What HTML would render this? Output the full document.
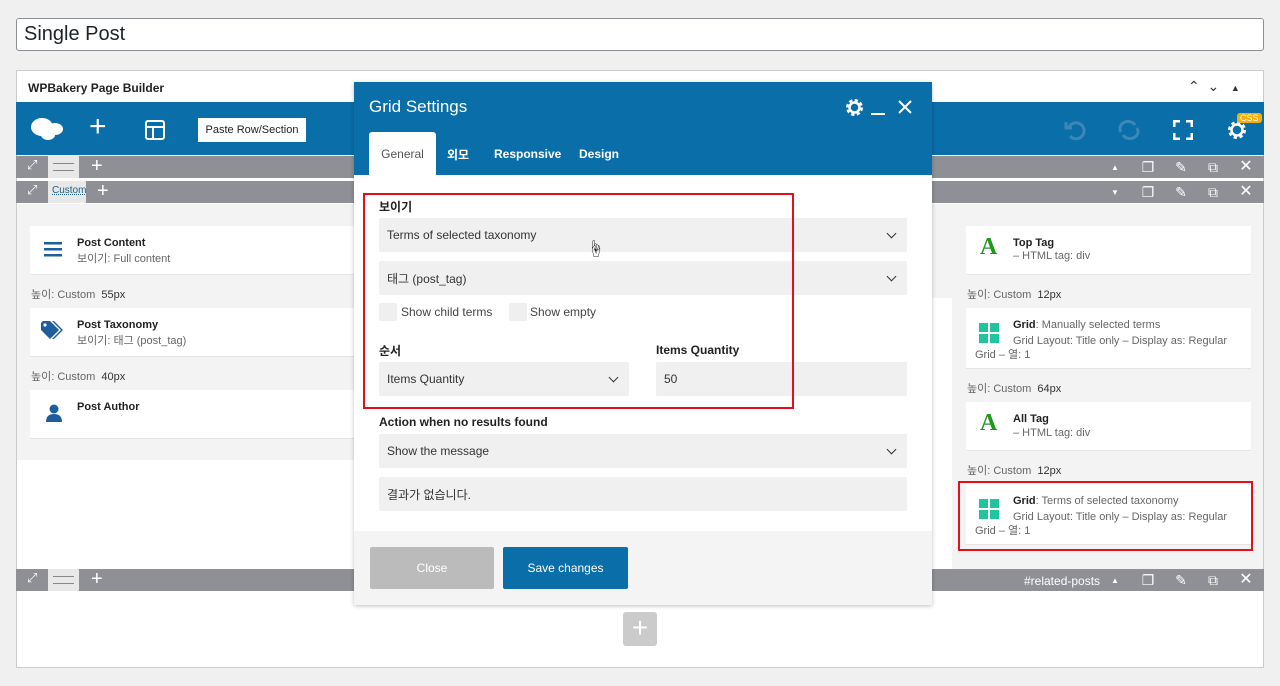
<!DOCTYPE html>
<html><head><meta charset="utf-8"><style>
*{box-sizing:border-box;margin:0;padding:0}
body{width:1280px;height:686px;background:#f0f0f0;font-family:"Liberation Sans","Noto Sans CJK KR",sans-serif;position:relative;overflow:hidden;color:#222}
.abs{position:absolute}
.title{left:16px;top:18px;width:1248px;height:33px;background:#fff;border:1px solid #8c8f94;border-radius:3px;font-size:20px;padding:4px 7px;color:#1d2327}
.panel{left:16px;top:70px;width:1248px;height:598px;background:#fff;border:1px solid #ccc}
.gbar{background:#8e9095;height:22px;left:16px;width:1248px}
.ico{color:#fff;font-size:16px}
.card{background:#fff;border-bottom:1px solid #e4e4e4}
.ct{font-size:11px;font-weight:bold;color:#222}
.cs{font-size:11px;color:#666}
.hl{font-size:11px;color:#666}
.hl b{color:#333;font-weight:normal}
.sel{background:#f0f0f0;border-radius:2px;font-size:12px;color:#333;padding:0 8px;display:flex;align-items:center;justify-content:space-between}
.chev{width:7px;height:7px;border-right:1.5px solid #333;border-bottom:1.5px solid #333;transform:rotate(45deg);margin-right:4px;margin-top:-4px}
.lbl{font-size:12px;font-weight:bold;color:#222}
.ri{position:absolute;color:#fff;font-size:14px;line-height:14px;width:16px;text-align:center}
</style></head><body>
<div class="abs title">Single Post</div>
<div class="abs panel"></div>
<div class="abs" style="left:28px;top:81px;font-size:12px;font-weight:bold">WPBakery Page Builder</div>
<div class="abs" style="left:1188px;top:78px;font-size:14px;color:#333">&#8963;&nbsp; &#8964;&nbsp;&nbsp; <span style="font-size:9px">&#9650;</span></div>
<div class="abs" style="left:16px;top:102px;width:1248px;height:53px;background:#0a6ea8"></div>
<svg class="abs" style="left:30px;top:115px" width="34" height="26"><ellipse cx="12" cy="12" rx="11" ry="9" fill="#fff"/><ellipse cx="25" cy="14" rx="8" ry="6" fill="#fff"/><ellipse cx="18" cy="20" rx="7" ry="5" fill="#fff"/></svg>
<div class="abs" style="left:89px;top:112px;color:#fff;font-size:30px;line-height:30px">+</div>
<svg class="abs" style="left:145px;top:120px" width="20" height="20"><rect x="1" y="1" width="18" height="18" rx="2" fill="none" stroke="#fff" stroke-width="2"/><path d="M1 7H19M8 7V19" stroke="#fff" stroke-width="2"/></svg>
<div class="abs" style="left:198px;top:118px;width:108px;height:24px;background:#fff;font-size:11px;line-height:24px;text-align:center;color:#222">Paste Row/Section</div>
<svg class="abs" style="left:1064px;top:119px" width="22" height="22" fill="none" stroke="#3d87b8" stroke-width="3"><path d="M5 8 A8 8 0 1 1 6 17"/><path d="M2 3V9H8"/></svg>
<svg class="abs" style="left:1118px;top:120px" width="22" height="20" fill="none" stroke="#3d87b8" stroke-width="3"><path d="M3 12A8 7 0 0 1 17 5M19 8A8 7 0 0 1 5 15"/></svg>
<svg class="abs" style="left:1173px;top:120px" width="20" height="20" fill="none" stroke="#fff" stroke-width="3"><path d="M1 7V1H7M13 1H19V7M19 13V19H13M7 19H1V13"/></svg>
<svg class="abs" style="left:1227px;top:120px" width="20" height="20"><circle cx="10" cy="10" r="7" fill="none" stroke="#fff" stroke-width="4" stroke-dasharray="3 2.5"/><circle cx="10" cy="10" r="5.5" fill="none" stroke="#fff" stroke-width="2.5"/></svg>
<div class="abs" style="left:1237px;top:113px;background:#f5b10a;color:#fff;font-size:9px;padding:0 3px;border-radius:3px">CSS</div>

<div class="abs gbar" style="top:156px"></div>
<div class="abs" style="left:48px;top:156px;width:31px;height:22px;background:#e8e8e8"><div style="margin:7px 5px;height:8px;border-top:1px solid #888;border-bottom:1px solid #888"></div></div>
<div class="abs gbar" style="top:181px"></div>
<div class="abs" style="left:48px;top:181px;width:38px;height:22px;background:#e8e8e8;font-size:10px;color:#1f5e8a;text-decoration:underline dotted;padding:4px 4px">Custom</div>
<div class="abs ico" style="left:27px;top:157px;font-size:13px">&#10530;</div>
<div class="abs ico" style="left:27px;top:182px;font-size:13px">&#10530;</div>
<div class="abs ico" style="left:91px;top:155px;font-size:20px;line-height:22px">+</div>
<div class="abs ico" style="left:97px;top:180px;font-size:20px;line-height:22px">+</div>

<div class="ri" style="left:1107px;top:161px;font-size:8px">&#9650;</div>
<div class="ri" style="left:1140px;top:160px">&#10064;</div>
<div class="ri" style="left:1173px;top:160px">&#9998;</div>
<div class="ri" style="left:1205px;top:160px">&#10697;</div>
<div class="ri" style="left:1238px;top:160px;font-size:16px">&#10005;</div>
<div class="ri" style="left:1107px;top:186px;font-size:8px">&#9660;</div>
<div class="ri" style="left:1140px;top:185px">&#10064;</div>
<div class="ri" style="left:1173px;top:185px">&#9998;</div>
<div class="ri" style="left:1205px;top:185px">&#10697;</div>
<div class="ri" style="left:1238px;top:185px;font-size:16px">&#10005;</div>

<!-- left column -->
<div class="abs" style="left:17px;top:204px;width:337px;height:256px;background:#f3f3f3"></div>
<div class="abs card" style="left:30px;top:226px;width:324px;height:49px"></div>
<svg class="abs" style="left:44px;top:242px" width="18" height="16" fill="#1d5f9e"><rect y="0" width="18" height="2.5"/><rect y="6" width="18" height="2.5"/><rect y="12" width="18" height="2.5"/></svg>
<div class="abs ct" style="left:77px;top:237px">Post Content</div>
<div class="abs cs" style="left:77px;top:250px">보이기: Full content</div>
<div class="abs hl" style="left:31px;top:286px">높이: Custom &nbsp;<b>55px</b></div>
<div class="abs card" style="left:30px;top:308px;width:324px;height:49px"></div>
<svg class="abs" style="left:40px;top:320px" width="26" height="22" fill="#1d5f9e"><path d="M1 3 L1 10 L10 19 L19 10 L10 1 L3 1Z"/><path d="M12 1 L21 10 L12 19 L14 19 L23 10 L14 1Z"/><circle cx="5" cy="5" r="1.6" fill="#fff"/></svg>
<div class="abs ct" style="left:77px;top:319px">Post Taxonomy</div>
<div class="abs cs" style="left:77px;top:332px">보이기: 태그 (post_tag)</div>
<div class="abs hl" style="left:31px;top:368px">높이: Custom &nbsp;<b>40px</b></div>
<div class="abs card" style="left:30px;top:390px;width:324px;height:49px"></div>
<svg class="abs" style="left:44px;top:403px" width="20" height="20" fill="#1d5f9e"><circle cx="10" cy="6" r="4.5"/><path d="M2 19 Q2 11 10 11 Q18 11 18 19Z"/></svg>
<div class="abs ct" style="left:77px;top:401px">Post Author</div>

<!-- right column -->
<div class="abs" style="left:952px;top:204px;width:311px;height:365px;background:#f3f3f3"></div>
<div class="abs" style="left:932px;top:204px;width:20px;height:94px;background:#f3f3f3"></div>
<div class="abs card" style="left:966px;top:226px;width:285px;height:49px"></div>
<div class="abs" style="left:980px;top:234px;font-size:24px;font-weight:bold;color:#1a9a1a;font-family:'Liberation Serif',serif">A</div>
<div class="abs ct" style="left:1013px;top:237px">Top Tag</div>
<div class="abs cs" style="left:1013px;top:250px">– HTML tag: div</div>
<div class="abs hl" style="left:967px;top:286px">높이: Custom &nbsp;<b>12px</b></div>
<div class="abs card" style="left:966px;top:308px;width:285px;height:61px"></div>
<svg class="abs" style="left:979px;top:323px" width="20" height="20" fill="#22c4a0"><rect width="9" height="9"/><rect x="11" width="9" height="9"/><rect y="11" width="9" height="9"/><rect x="11" y="11" width="9" height="9"/></svg>
<div class="abs cs" style="left:1013px;top:319px"><b style="color:#222">Grid</b>: Manually selected terms</div>
<div class="abs cs" style="left:975px;top:334px;width:270px;line-height:14px;text-indent:38px">Grid Layout: Title only – Display as: Regular Grid – 열: 1</div>
<div class="abs hl" style="left:967px;top:380px">높이: Custom &nbsp;<b>64px</b></div>
<div class="abs card" style="left:966px;top:402px;width:285px;height:49px"></div>
<div class="abs" style="left:980px;top:410px;font-size:24px;font-weight:bold;color:#1a9a1a;font-family:'Liberation Serif',serif">A</div>
<div class="abs ct" style="left:1013px;top:413px">All Tag</div>
<div class="abs cs" style="left:1013px;top:427px">– HTML tag: div</div>
<div class="abs hl" style="left:967px;top:462px">높이: Custom &nbsp;<b>12px</b></div>
<div class="abs card" style="left:966px;top:484px;width:285px;height:61px"></div>
<svg class="abs" style="left:979px;top:499px" width="20" height="20" fill="#22c4a0"><rect width="9" height="9"/><rect x="11" width="9" height="9"/><rect y="11" width="9" height="9"/><rect x="11" y="11" width="9" height="9"/></svg>
<div class="abs cs" style="left:1013px;top:495px"><b style="color:#222">Grid</b>: Terms of selected taxonomy</div>
<div class="abs cs" style="left:975px;top:510px;width:270px;line-height:14px;text-indent:38px">Grid Layout: Title only – Display as: Regular Grid – 열: 1</div>
<div class="abs" style="left:958px;top:481px;width:295px;height:70px;border:2px solid #e0101e"></div>

<div class="abs gbar" style="top:569px"></div>
<div class="abs" style="left:48px;top:569px;width:31px;height:22px;background:#e8e8e8"><div style="margin:7px 5px;height:8px;border-top:1px solid #888;border-bottom:1px solid #888"></div></div>
<div class="abs ico" style="left:27px;top:570px;font-size:13px">&#10530;</div>
<div class="abs ico" style="left:91px;top:568px;font-size:20px;line-height:22px">+</div>
<div class="abs" style="left:1024px;top:574px;color:#fff;font-size:12px">#related-posts</div>
<div class="ri" style="left:1107px;top:574px;font-size:8px">&#9650;</div>
<div class="ri" style="left:1140px;top:573px">&#10064;</div>
<div class="ri" style="left:1173px;top:573px">&#9998;</div>
<div class="ri" style="left:1205px;top:573px">&#10697;</div>
<div class="ri" style="left:1238px;top:573px;font-size:16px">&#10005;</div>
<div class="abs" style="left:623px;top:612px;width:34px;height:34px;background:#cbcbcb;border-radius:3px;color:#fff;font-size:28px;line-height:32px;text-align:center">+</div>

<!-- modal -->
<div class="abs" style="left:354px;top:82px;width:578px;height:523px;background:#fff;box-shadow:0 1px 4px rgba(0,0,0,.25)"></div>
<div class="abs" style="left:354px;top:82px;width:578px;height:93px;background:#0a6ea8"></div>
<div class="abs" style="left:369px;top:97px;font-size:17px;color:#fff">Grid Settings</div>
<svg class="abs" style="left:845px;top:98px" width="19" height="19"><circle cx="9.5" cy="9.5" r="6.5" fill="none" stroke="#fff" stroke-width="4" stroke-dasharray="3 2.1"/><circle cx="9.5" cy="9.5" r="5" fill="none" stroke="#fff" stroke-width="2.5"/></svg>
<div class="abs" style="left:871px;top:113px;width:14px;height:2px;background:#fff"></div>
<svg class="abs" style="left:898px;top:100px" width="14" height="14" stroke="#fff" stroke-width="2"><path d="M1 1L13 13M13 1L1 13"/></svg>
<div class="abs" style="left:369px;top:132px;width:67px;height:44px;background:#fff;border-radius:3px 3px 0 0;font-size:12px;color:#555;text-align:center;line-height:44px">General</div>
<div class="abs" style="left:447px;top:146px;font-size:12px;color:#fff;font-weight:bold">외모</div>
<div class="abs" style="left:494px;top:147px;font-size:12px;color:#fff;font-weight:bold">Responsive</div>
<div class="abs" style="left:579px;top:147px;font-size:12px;color:#fff;font-weight:bold">Design</div>

<div class="abs lbl" style="left:379px;top:198px">보이기</div>
<div class="abs sel" style="left:379px;top:218px;width:528px;height:34px">Terms of selected taxonomy<span class="chev"></span></div>
<div class="abs" style="left:587px;top:235px;font-size:17px;color:#222">☝</div>
<div class="abs sel" style="left:379px;top:261px;width:528px;height:34px">태그 (post_tag)<span class="chev"></span></div>
<div class="abs" style="left:379px;top:303px;width:18px;height:18px;background:#efefef;border-radius:2px"></div>
<div class="abs" style="left:401px;top:305px;font-size:12px;color:#444">Show child terms</div>
<div class="abs" style="left:509px;top:303px;width:18px;height:18px;background:#efefef;border-radius:2px"></div>
<div class="abs" style="left:530px;top:305px;font-size:12px;color:#444">Show empty</div>
<div class="abs lbl" style="left:379px;top:342px">순서</div>
<div class="abs lbl" style="left:656px;top:343px">Items Quantity</div>
<div class="abs sel" style="left:379px;top:362px;width:250px;height:34px">Items Quantity<span class="chev"></span></div>
<div class="abs sel" style="left:656px;top:362px;width:251px;height:34px">50</div>
<div class="abs" style="left:363px;top:193px;width:431px;height:216px;border:2px solid #e0101e"></div>
<div class="abs lbl" style="left:379px;top:415px">Action when no results found</div>
<div class="abs sel" style="left:379px;top:434px;width:528px;height:34px">Show the message<span class="chev"></span></div>
<div class="abs sel" style="left:379px;top:477px;width:528px;height:34px">결과가 없습니다.</div>

<div class="abs" style="left:354px;top:531px;width:578px;height:74px;background:#f4f4f4"></div>
<div class="abs" style="left:370px;top:547px;width:124px;height:42px;background:#bbb;border-radius:2px;color:#fff;font-size:12px;line-height:42px;text-align:center">Close</div>
<div class="abs" style="left:503px;top:547px;width:125px;height:42px;background:#0a6ea8;border-radius:2px;color:#fff;font-size:12px;line-height:42px;text-align:center">Save changes</div>
</body></html>
